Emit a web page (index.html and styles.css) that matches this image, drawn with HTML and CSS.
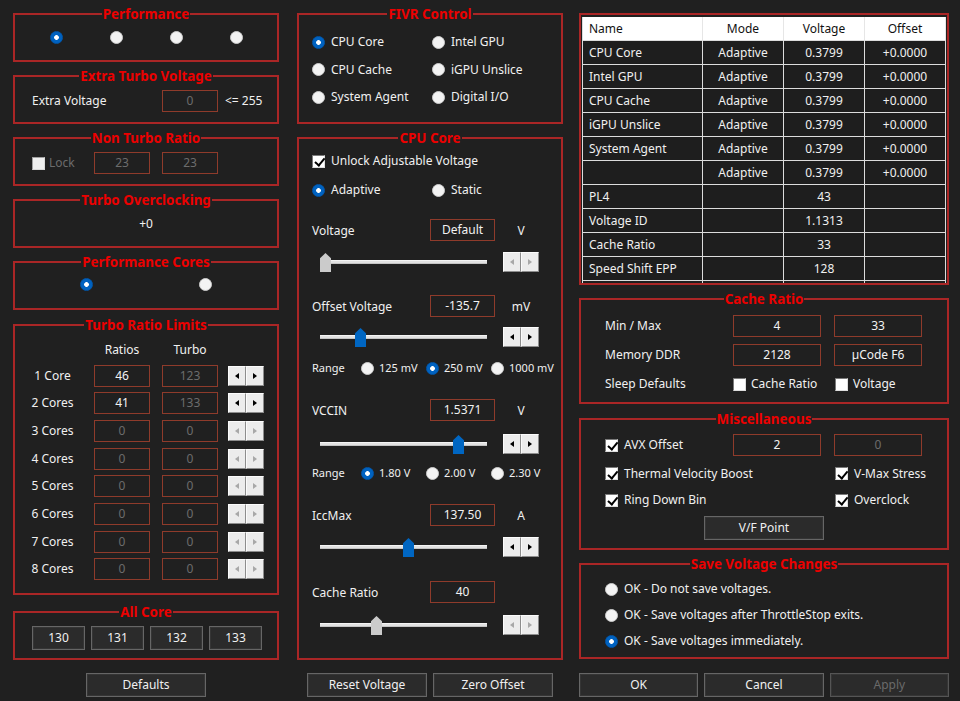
FILE: index.html
```html
<!DOCTYPE html>
<html lang="en">
<head>
<meta charset="utf-8">
<title>FIVR</title>
<link rel="stylesheet" href="styles.css">
</head>
<body>
<div class="app">
  <!-- Column 1 -->
  <div class="col col1">
    <section class="group h49">
      <div class="group-title">Performance</div>
      <div class="perf-radios">
        <span class="radio on"></span><span class="radio"></span><span class="radio"></span><span class="radio"></span>
      </div>
    </section>

    <section class="group h49">
      <div class="group-title">Extra Turbo Voltage</div>
      <div class="etv-row">
        <span class="etv-label">Extra Voltage</span>
        <span class="field dis">0</span>
        <span class="etv-max">&lt;= 255</span>
      </div>
    </section>

    <section class="group h49">
      <div class="group-title">Non Turbo Ratio</div>
      <div class="ntr-row">
        <span class="ntr-lock"><span class="checkbox dis"></span><span class="dim">Lock</span></span>
        <span class="field dis">23</span>
        <span class="field dis">23</span>
      </div>
    </section>

    <section class="group h49">
      <div class="group-title">Turbo Overclocking</div>
      <div class="to-val">+0</div>
    </section>

    <section class="group h49">
      <div class="group-title">Performance Cores</div>
      <div class="pc-radios"><span class="radio on"></span><span class="radio"></span></div>
    </section>

    <section class="group g-trl">
      <div class="group-title">Turbo Ratio Limits</div>
      <div class="trl-grid">
        <span></span><span class="trl-head">Ratios</span><span class="trl-head">Turbo</span><span></span>

        <span class="trl-label">1 Core</span><span class="field">46</span><span class="field dis">123</span>
        <span class="spin"><span class="sb l"></span><span class="sb r"></span></span>

        <span class="trl-label">2 Cores</span><span class="field">41</span><span class="field dis">133</span>
        <span class="spin"><span class="sb l"></span><span class="sb r"></span></span>

        <span class="trl-label">3 Cores</span><span class="field dis">0</span><span class="field dis">0</span>
        <span class="spin dis"><span class="sb l"></span><span class="sb r"></span></span>

        <span class="trl-label">4 Cores</span><span class="field dis">0</span><span class="field dis">0</span>
        <span class="spin dis"><span class="sb l"></span><span class="sb r"></span></span>

        <span class="trl-label">5 Cores</span><span class="field dis">0</span><span class="field dis">0</span>
        <span class="spin dis"><span class="sb l"></span><span class="sb r"></span></span>

        <span class="trl-label">6 Cores</span><span class="field dis">0</span><span class="field dis">0</span>
        <span class="spin dis"><span class="sb l"></span><span class="sb r"></span></span>

        <span class="trl-label">7 Cores</span><span class="field dis">0</span><span class="field dis">0</span>
        <span class="spin dis"><span class="sb l"></span><span class="sb r"></span></span>

        <span class="trl-label">8 Cores</span><span class="field dis">0</span><span class="field dis">0</span>
        <span class="spin dis"><span class="sb l"></span><span class="sb r"></span></span>
      </div>
    </section>

    <section class="group h49 g-allcore">
      <div class="group-title">All Core</div>
      <div class="allcore">
        <button class="btn btn-core">130</button>
        <button class="btn btn-core">131</button>
        <button class="btn btn-core">132</button>
        <button class="btn btn-core">133</button>
      </div>
    </section>

    <button class="btn btn-wide center">Defaults</button>
  </div>

  <!-- Column 2 -->
  <div class="col col2">
    <section class="group g-fivr">
      <div class="group-title">FIVR Control</div>
      <div class="fivr-grid">
        <span class="opt"><span class="radio on"></span>CPU Core</span>
        <span class="opt"><span class="radio"></span>Intel GPU</span>
        <span class="opt"><span class="radio"></span>CPU Cache</span>
        <span class="opt"><span class="radio"></span>iGPU Unslice</span>
        <span class="opt"><span class="radio"></span>System Agent</span>
        <span class="opt"><span class="radio"></span>Digital I/O</span>
      </div>
    </section>

    <section class="group g-cpu">
      <div class="group-title">CPU Core</div>
      <div class="cpu-body">
        <span class="opt"><span class="checkbox on"></span>Unlock Adjustable Voltage</span>

        <div class="two-opt mt11">
          <span class="opt"><span class="radio on"></span>Adaptive</span>
          <span class="opt"><span class="radio"></span>Static</span>
        </div>

        <div class="param mt20">
          <span>Voltage</span><span class="field wide">Default</span><span class="unit">V</span>
        </div>
        <div class="slider-row mt11">
          <span class="track"><span class="thumb gray" style="left:0px"></span></span>
          <span class="spin dis"><span class="sb l"></span><span class="sb r"></span></span>
        </div>

        <div class="param mt23">
          <span>Offset Voltage</span><span class="field wide">-135.7</span><span class="unit">mV</span>
        </div>
        <div class="slider-row mt10">
          <span class="track"><span class="thumb" style="left:35px"></span></span>
          <span class="spin"><span class="sb l"></span><span class="sb r"></span></span>
        </div>
        <div class="range mt12">
          <span>Range</span>
          <span class="opt"><span class="radio"></span>125 mV</span>
          <span class="opt"><span class="radio on"></span>250 mV</span>
          <span class="opt"><span class="radio"></span>1000 mV</span>
        </div>

        <div class="param mt22">
          <span>VCCIN</span><span class="field wide">1.5371</span><span class="unit">V</span>
        </div>
        <div class="slider-row mt13">
          <span class="track"><span class="thumb" style="left:133px"></span></span>
          <span class="spin"><span class="sb l"></span><span class="sb r"></span></span>
        </div>
        <div class="range mt10">
          <span>Range</span>
          <span class="opt"><span class="radio on"></span>1.80 V</span>
          <span class="opt"><span class="radio"></span>2.00 V</span>
          <span class="opt"><span class="radio"></span>2.30 V</span>
        </div>

        <div class="param mt22">
          <span>IccMax</span><span class="field wide">137.50</span><span class="unit">A</span>
        </div>
        <div class="slider-row mt11">
          <span class="track"><span class="thumb" style="left:83px"></span></span>
          <span class="spin"><span class="sb l"></span><span class="sb r"></span></span>
        </div>

        <div class="param mt24">
          <span>Cache Ratio</span><span class="field wide">40</span><span class="unit"></span>
        </div>
        <div class="slider-row mt12">
          <span class="track"><span class="thumb gray" style="left:51px"></span></span>
          <span class="spin dis"><span class="sb l"></span><span class="sb r"></span></span>
        </div>
      </div>
    </section>

    <div class="btn-pair">
      <button class="btn btn-wide">Reset Voltage</button>
      <button class="btn btn-wide">Zero Offset</button>
    </div>
  </div>

  <!-- Column 3 -->
  <div class="col col3">
    <div class="table-box">
      <table class="vtable">
        <colgroup><col class="c-name"><col class="c-num"><col class="c-num"><col class="c-num"></colgroup>
        <thead>
          <tr><th class="name">Name</th><th>Mode</th><th>Voltage</th><th>Offset</th></tr>
        </thead>
        <tbody>
          <tr><td class="name">CPU Core</td><td>Adaptive</td><td>0.3799</td><td>+0.0000</td></tr>
          <tr><td class="name">Intel GPU</td><td>Adaptive</td><td>0.3799</td><td>+0.0000</td></tr>
          <tr><td class="name">CPU Cache</td><td>Adaptive</td><td>0.3799</td><td>+0.0000</td></tr>
          <tr><td class="name">iGPU Unslice</td><td>Adaptive</td><td>0.3799</td><td>+0.0000</td></tr>
          <tr><td class="name">System Agent</td><td>Adaptive</td><td>0.3799</td><td>+0.0000</td></tr>
          <tr><td class="name"></td><td>Adaptive</td><td>0.3799</td><td>+0.0000</td></tr>
          <tr><td class="name">PL4</td><td></td><td>43</td><td></td></tr>
          <tr><td class="name">Voltage ID</td><td></td><td>1.1313</td><td></td></tr>
          <tr><td class="name">Cache Ratio</td><td></td><td>33</td><td></td></tr>
          <tr><td class="name">Speed Shift EPP</td><td></td><td>128</td><td></td></tr>
          <tr><td class="name"></td><td></td><td></td><td></td></tr>
        </tbody>
      </table>
    </div>

    <section class="group g-cache">
      <div class="group-title">Cache Ratio</div>
      <div class="form-grid cache-grid">
        <span>Min / Max</span><span class="field w88">4</span><span class="field w88">33</span>
        <span>Memory DDR</span><span class="field w88">2128</span><span class="field w88">µCode F6</span>
        <span>Sleep Defaults</span>
        <span class="opt g5"><span class="checkbox"></span>Cache Ratio</span>
        <span class="opt g5 nudge"><span class="checkbox"></span>Voltage</span>
      </div>
    </section>

    <section class="group g-misc">
      <div class="group-title">Miscellaneous</div>
      <div class="form-grid misc-grid">
        <span class="opt"><span class="checkbox on"></span>AVX Offset</span>
        <span class="field w88">2</span>
        <span class="field w88 dis">0</span>
        <span class="opt span2"><span class="checkbox on"></span>Thermal Velocity Boost</span>
        <span class="opt nudge"><span class="checkbox on"></span>V-Max Stress</span>
        <span class="opt span2"><span class="checkbox on"></span>Ring Down Bin</span>
        <span class="opt nudge"><span class="checkbox on"></span>Overclock</span>
      </div>
      <button class="btn btn-wide center vf">V/F Point</button>
    </section>

    <section class="group g-save">
      <div class="group-title">Save Voltage Changes</div>
      <div class="save-list">
        <span class="opt"><span class="radio"></span>OK - Do not save voltages.</span>
        <span class="opt"><span class="radio"></span>OK - Save voltages after ThrottleStop exits.</span>
        <span class="opt"><span class="radio on"></span>OK - Save voltages immediately.</span>
      </div>
    </section>

    <div class="bottom-btns">
      <button class="btn">OK</button>
      <button class="btn">Cancel</button>
      <button class="btn disabled">Apply</button>
    </div>
  </div>
</div>
</body>
</html>
```

FILE: styles.css
```css
* { box-sizing: border-box; }

html, body {
  margin: 0;
  background: #202020;
}

body {
  width: 960px;
  height: 701px;
  overflow: hidden;
  font-family: "Noto Sans", "Open Sans", sans-serif;
  font-size: 12px;
  line-height: 18px;
  color: #f0f0f0;
}

.app {
  display: flex;
  align-items: flex-start;
  padding: 13px 0 0 13px;
}

.col {
  display: flex;
  flex-direction: column;
  gap: 13px;
}
.col1 { width: 266px; }
.col2 { width: 266px; margin-left: 18px; }
.col3 { width: 370px; margin-left: 16px; }

/* Group boxes */
.group {
  border: 2px solid #aa2626;
}
.group-title {
  display: table;
  margin: -10px auto 0;
  padding: 0 1px;
  background: #202020;
  color: #ec0000;
  font-weight: 700;
  font-size: 13.4px;
  line-height: 18px;
}
.h49 { height: 49px; }
.g-trl { height: 271px; margin-top: 1px; }
.g-allcore { margin-top: 3px; }
.g-fivr { height: 111px; }
.g-cpu { height: 523px; }
.g-cache { height: 106px; }
.g-misc { height: 132px; margin-top: 1px; }
.g-save { height: 96px; }

/* Controls */
.radio {
  flex: none;
  display: inline-block;
  width: 13px;
  height: 13px;
  border-radius: 50%;
  background: #f3f3f3;
  border: 1px solid #cdcdcd;
}
.radio.on {
  background: radial-gradient(circle, #ffffff 0 2px, #0062c0 2.7px);
  border-color: #0057ac;
}

.checkbox {
  flex: none;
  position: relative;
  display: inline-block;
  width: 13px;
  height: 13px;
  background: #ffffff;
  border: 1px solid;
  border-color: #7a7a7a #dedede #dedede #7a7a7a;
}
.checkbox.dis { background: #efefef; border-color: #a0a0a0 #dadada #dadada #a0a0a0; }
.checkbox.on::after {
  content: "";
  position: absolute;
  left: 3.5px;
  top: 0.5px;
  width: 4px;
  height: 7.5px;
  border: solid #000;
  border-width: 0 2px 2px 0;
  transform: rotate(40deg);
}

.opt {
  display: flex;
  align-items: center;
  gap: 6px;
  white-space: nowrap;
}
.opt.g5 { gap: 5px; }

.dim { color: #6c6c6c; }

.field {
  flex: none;
  display: flex;
  align-items: center;
  justify-content: center;
  width: 56px;
  height: 22px;
  border: 1px solid #8f3b2b;
  color: #f2f2f2;
  white-space: nowrap;
}
.field.dis { color: #6c6c6c; }
.field.wide { width: 65px; }
.field.w88 { width: 88px; }

.spin {
  flex: none;
  display: flex;
  width: 36px;
  height: 20px;
}
.sb {
  width: 18px;
  height: 20px;
  display: flex;
  align-items: center;
  justify-content: center;
  background: #ececec;
  border: 1px solid;
  border-color: #fbfbfb #8d8d8d #8d8d8d #fbfbfb;
}
.sb::before {
  content: "";
  border-top: 3.5px solid transparent;
  border-bottom: 3.5px solid transparent;
}
.sb.l::before { border-right: 4px solid #000; }
.sb.r::before { border-left: 4px solid #000; }
.spin.dis .sb.l::before { border-right-color: #a8a8a8; }
.spin.dis .sb.r::before { border-left-color: #a8a8a8; }

.btn {
  height: 24px;
  padding: 0;
  background: #2b2b2b;
  border: 1px solid #666666;
  box-shadow: inset 0 0 0 1px #353535;
  color: #f0f0f0;
  font-family: inherit;
  font-size: 12px;
  line-height: 20px;
}
.btn.disabled { color: #6a6a6a; border-color: #555; }
.btn-wide { width: 120px; }
.btn-core { width: 53px; }
.center { align-self: center; }

/* Column 1 content */
.perf-radios {
  display: flex;
  gap: 47px;
  padding: 8px 0 0 35px;
}
.etv-row {
  display: flex;
  align-items: center;
  padding: 5px 0 0 17px;
}
.etv-label { width: 130px; }
.etv-max { margin-left: 7px; }

.ntr-row {
  display: flex;
  align-items: center;
  gap: 12px;
  padding: 5px 0 0 17px;
}
.ntr-lock {
  display: flex;
  align-items: center;
  gap: 4px;
  width: 50px;
}

.to-val {
  text-align: center;
  padding-top: 6px;
}

.pc-radios {
  display: flex;
  gap: 106px;
  padding: 7px 0 0 65px;
}

.trl-grid {
  display: grid;
  grid-template-columns: 79px 68px 66px 36px;
  grid-template-rows: 18px repeat(8, 22px);
  row-gap: 5.67px;
  align-items: center;
  padding-top: 7px;
}
.trl-head { width: 56px; text-align: center; }
.trl-label { text-align: center; padding-right: 4px; }

.allcore {
  display: flex;
  gap: 6px;
  padding: 5px 0 0 17px;
}

/* Column 2 content */
.fivr-grid {
  display: grid;
  grid-template-columns: 120px auto;
  grid-auto-rows: 18px;
  row-gap: 9.5px;
  padding: 10px 0 0 13px;
}

.cpu-body {
  display: flex;
  flex-direction: column;
  padding: 5px 0 0 13px;
}
.cpu-body > .opt { height: 18px; }
.two-opt {
  display: grid;
  grid-template-columns: 120px auto;
  height: 18px;
}
.param {
  display: grid;
  grid-template-columns: 118px 65px 52px;
  align-items: center;
  height: 22px;
}
.param > span:first-child { padding-top: 2px; }
.unit { text-align: center; padding-top: 2px; }
.slider-row {
  display: flex;
  align-items: center;
  height: 20px;
}
.track {
  position: relative;
  width: 167px;
  height: 4px;
  margin-left: 8px;
  margin-right: 16px;
  background: #e2e2e2;
  border-top: 1px solid #f4f4f4;
  border-bottom: 1px solid #c4c4c4;
}
.thumb {
  position: absolute;
  top: -8px;
  width: 11px;
  height: 19px;
  background: #0066c2;
  clip-path: polygon(0 28%, 50% 0, 100% 28%, 100% 100%, 0 100%);
}
.thumb.gray { background: #cbcbcb; }

.range {
  display: grid;
  grid-template-columns: 49px 65px 65px auto;
  align-items: center;
  height: 18px;
  font-size: 11px;
}
.range .opt { gap: 5px; }

.mt10 { margin-top: 10px; }
.mt11 { margin-top: 11px; }
.mt12 { margin-top: 12px; }
.mt13 { margin-top: 13px; }
.mt20 { margin-top: 20px; }
.mt22 { margin-top: 22px; }
.mt23 { margin-top: 23px; }
.mt24 { margin-top: 24px; }

.btn-pair {
  display: flex;
  justify-content: center;
  gap: 6px;
}

/* Column 3 content */
.table-box {
  height: 272px;
  border: 2px solid #aa2626;
  padding: 2px 1px 1px 1px;
  overflow: hidden;
}
.vtable {
  width: 364px;
  table-layout: fixed;
  border-collapse: separate;
  border-spacing: 0;
}
.c-name { width: 121px; }
.c-num { width: 81px; }
.vtable tr { height: 24px; }
.vtable th,
.vtable td {
  padding: 1px 0 0 0;
  text-align: center;
  font-weight: 400;
  white-space: nowrap;
  border-right: 1px solid #dcdcdc;
  border-bottom: 1px solid #dcdcdc;
}
.vtable th:first-child,
.vtable td:first-child { border-left: 1px solid #dcdcdc; }
.vtable th {
  background: #ffffff;
  color: #111111;
  border-right-color: #e6e6e6;
}
.vtable td { background: #1e1e1e; }
.vtable .name { text-align: left; padding-left: 6px; }

.form-grid {
  display: grid;
  grid-template-columns: 115px 88px 88px;
  column-gap: 13px;
  align-items: center;
  padding-left: 24px;
}
.cache-grid {
  grid-template-rows: 22px 22px 22px;
  row-gap: 7px;
  padding-top: 7px;
}
.misc-grid {
  grid-template-rows: 22px 18px 18px;
  row-gap: 8.5px;
  padding-top: 6px;
}
.span2 { grid-column: span 2; }
.nudge { margin-left: 1px; }
.g-misc { display: flex; flex-direction: column; }
.vf { margin-top: 6.5px; }

.save-list {
  display: flex;
  flex-direction: column;
  gap: 8px;
  padding: 7px 0 0 24px;
}
.save-list .opt { height: 18px; }

.bottom-btns {
  display: grid;
  grid-template-columns: repeat(3, 1fr);
  gap: 6px;
  margin-top: 1px;
}
```
